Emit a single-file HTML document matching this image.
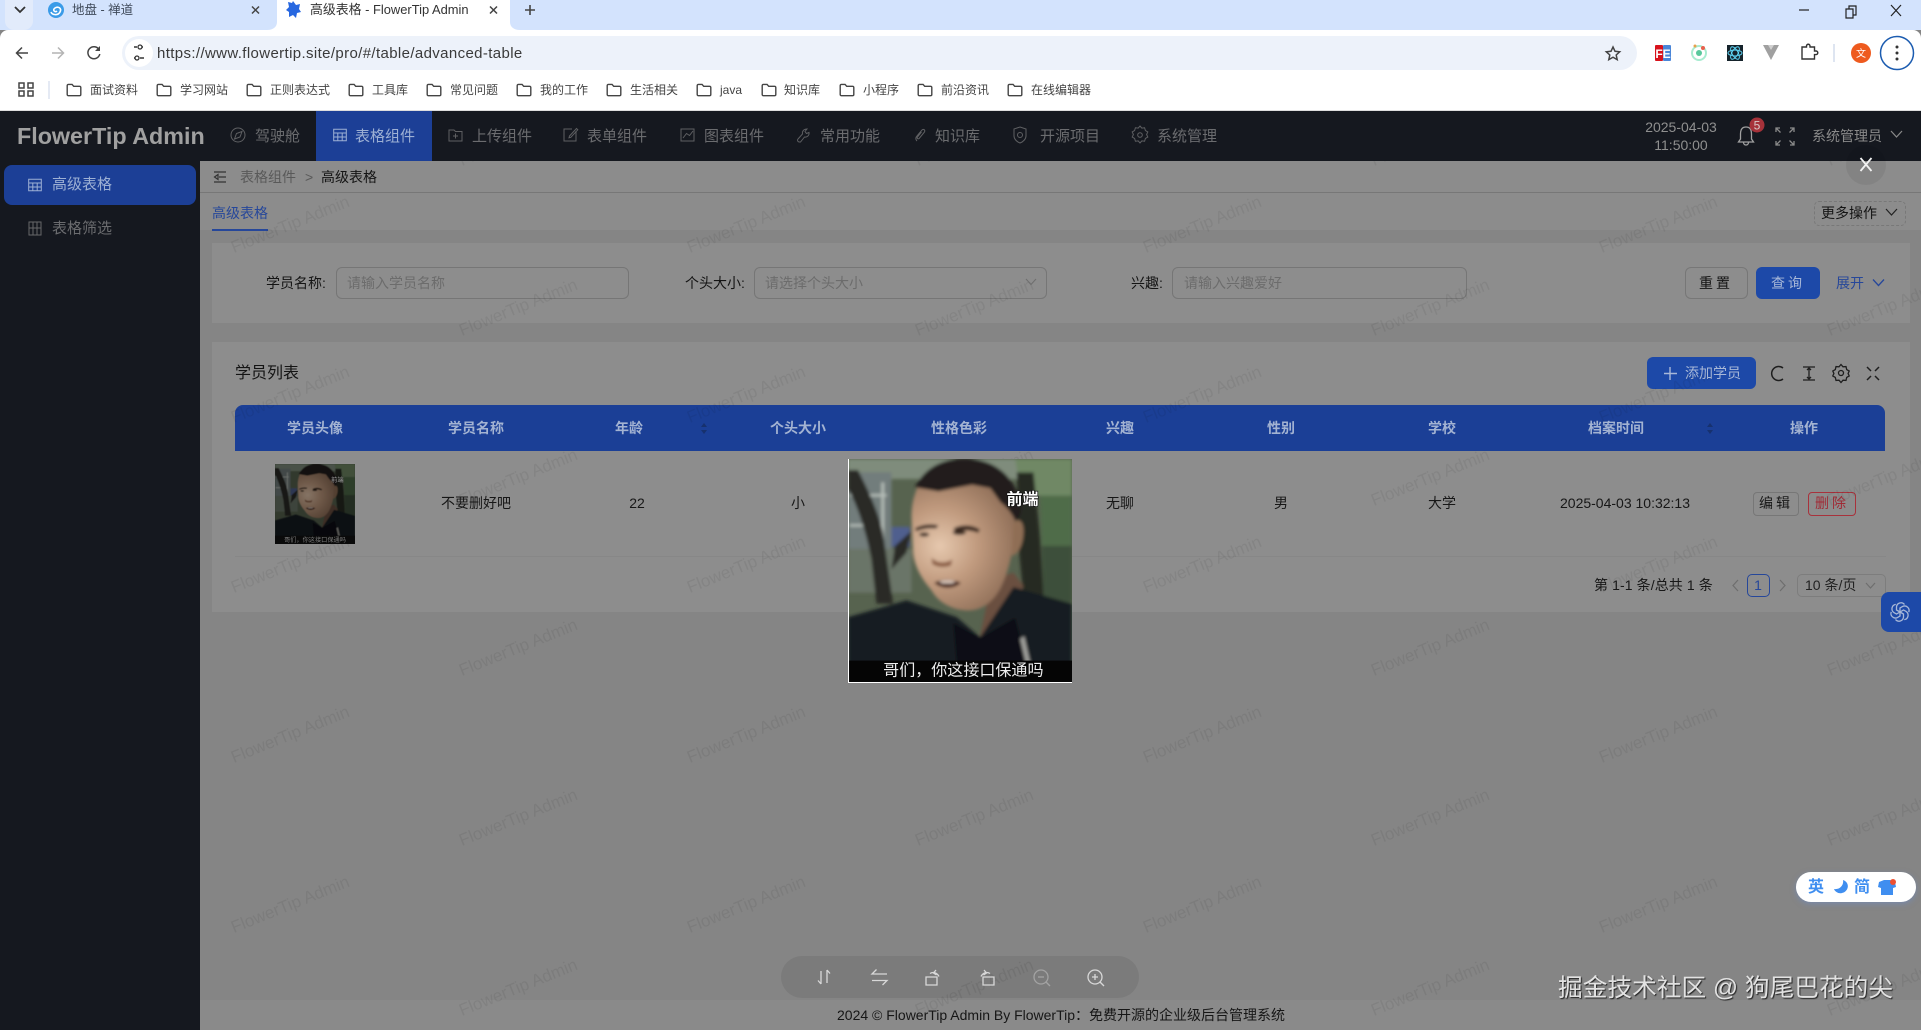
<!DOCTYPE html>
<html lang="zh-CN">
<head>
<meta charset="utf-8">
<title>高级表格 - FlowerTip Admin</title>
<style>
html,body{margin:0;padding:0;width:1921px;height:1030px;overflow:hidden;background:#858585;font-family:"Liberation Sans","Noto Sans CJK SC",sans-serif;}
.b{position:absolute;box-sizing:border-box}
.t{position:absolute;white-space:nowrap;line-height:20px;font-size:14px}
.c{transform:translateX(-50%)}
.bm{color:#444;font-size:12px}
.mn{color:#6b6c6f;font-size:15px}
.th{color:#a3b3d2;font-weight:700;font-size:14px;top:418px}
.td{color:#171717;font-size:14px;top:493px}
.lb{color:#141414;top:273px}
.ph{color:#6c6c6c;top:273px}
.inp{border:1px solid #767676;border-radius:6px;top:267px;height:32px}
svg.o{position:absolute;left:0;top:0;pointer-events:none}
</style>
</head>
<body>
<!-- browser chrome -->
<div class="b" style="left:0;top:0;width:1921px;height:30px;background:#d3e3fd"></div>
<div class="b" style="left:5px;top:0;width:28px;height:30px;background:#e2ebfb;border-radius:0 0 9px 9px"></div>
<div class="b" style="left:0;top:30px;width:1921px;height:81px;background:#fff;border-radius:8px 8px 0 0;border-bottom:1px solid #ddd"></div>
<div class="b" style="left:277px;top:0;width:233px;height:34px;background:#fff;border-radius:0 0 0 0"></div>
<div class="b" style="left:122px;top:36px;width:1515px;height:34px;background:#edf2fa;border-radius:17px"></div>
<div class="b" style="left:125px;top:39px;width:28px;height:28px;background:#fff;border-radius:50%"></div>
<div class="t" style="left:72px;top:0;font-size:12.5px;color:#3f4a5a">地盘 - 禅道</div>
<div class="t" style="left:310px;top:0;font-size:12.9px;color:#333">高级表格 - FlowerTip Admin</div>
<div class="t" style="left:157px;top:44px;font-size:15px;letter-spacing:.37px;color:#3a3a3a">https://www.flowertip.site/pro/#/table/advanced-table</div>
<div class="t bm" style="left:90px;top:80px">面试资料</div>
<div class="t bm" style="left:180px;top:80px">学习网站</div>
<div class="t bm" style="left:270px;top:80px">正则表达式</div>
<div class="t bm" style="left:372px;top:80px">工具库</div>
<div class="t bm" style="left:450px;top:80px">常见问题</div>
<div class="t bm" style="left:540px;top:80px">我的工作</div>
<div class="t bm" style="left:630px;top:80px">生活相关</div>
<div class="t bm" style="left:720px;top:80px">java</div>
<div class="t bm" style="left:784px;top:80px">知识库</div>
<div class="t bm" style="left:863px;top:80px">小程序</div>
<div class="t bm" style="left:941px;top:80px">前沿资讯</div>
<div class="t bm" style="left:1031px;top:80px">在线编辑器</div>

<!-- header + sidebar -->
<div class="b" style="left:0;top:111px;width:1921px;height:50px;background:#15181f"></div>
<div class="b" style="left:0;top:161px;width:200px;height:869px;background:#15181f"></div>
<div class="t" style="left:17px;top:122px;font-size:23.3px;line-height:28px;font-weight:700;color:#a0a0a0">FlowerTip Admin</div>
<div class="b" style="left:316px;top:111px;width:116px;height:50px;background:#1c3f96"></div>
<div class="t mn" style="left:255px;top:127px">驾驶舱</div>
<div class="t mn" style="left:355px;top:127px;color:#9db0d4">表格组件</div>
<div class="t mn" style="left:472px;top:127px">上传组件</div>
<div class="t mn" style="left:587px;top:127px">表单组件</div>
<div class="t mn" style="left:704px;top:127px">图表组件</div>
<div class="t mn" style="left:820px;top:127px">常用功能</div>
<div class="t mn" style="left:935px;top:127px">知识库</div>
<div class="t mn" style="left:1040px;top:127px">开源项目</div>
<div class="t mn" style="left:1157px;top:127px">系统管理</div>
<div class="t c" style="left:1681px;top:117px;color:#8f8f8f">2025-04-03</div>
<div class="t c" style="left:1681px;top:135px;color:#8f8f8f">11:50:00</div>
<div class="t" style="left:1812px;top:126px;color:#8a8a8a">系统管理员</div>
<div class="b" style="left:4px;top:165px;width:192px;height:40px;background:#1c3f96;border-radius:8px"></div>
<div class="t mn" style="left:52px;top:175px;color:#9db0d4">高级表格</div>
<div class="t mn" style="left:52px;top:219px">表格筛选</div>

<!-- main -->
<div class="b" style="left:200px;top:161px;width:1721px;height:32px;background:#8c8c8c;border-bottom:1px solid #777"></div>
<div class="b" style="left:200px;top:193px;width:1721px;height:37px;background:#8c8c8c"></div>
<div class="b" style="left:200px;top:1000px;width:1721px;height:30px;background:#8a8a8a"></div>
<div class="t" style="left:240px;top:167px;color:#595959">表格组件</div>
<div class="t" style="left:305px;top:167px;color:#595959">&gt;</div>
<div class="t" style="left:321px;top:167px;color:#141414">高级表格</div>
<div class="t" style="left:212px;top:203px;color:#26479a">高级表格</div>
<div class="b" style="left:212px;top:229px;width:56px;height:2px;background:#26479a"></div>
<div class="b" style="left:1814px;top:201px;width:92px;height:25px;border:1px dashed #787878;border-radius:5px"></div>
<div class="t" style="left:1821px;top:203px;color:#141414">更多操作</div>

<div class="b" style="left:212px;top:243px;width:1698px;height:80px;background:#8d8d8d"></div>
<div class="t lb" style="left:266px">学员名称:</div>
<div class="b inp" style="left:336px;width:293px"></div>
<div class="t ph" style="left:347px">请输入学员名称</div>
<div class="t lb" style="left:685px">个头大小:</div>
<div class="b inp" style="left:754px;width:293px"></div>
<div class="t ph" style="left:765px">请选择个头大小</div>
<div class="t lb" style="left:1131px">兴趣:</div>
<div class="b inp" style="left:1172px;width:295px"></div>
<div class="t ph" style="left:1184px">请输入兴趣爱好</div>
<div class="b" style="left:1685px;top:267px;width:63px;height:32px;border:1px solid #777;border-radius:6px"></div>
<div class="t c" style="left:1716px;top:273px;color:#141414;letter-spacing:3px">重置</div>
<div class="b" style="left:1756px;top:267px;width:64px;height:32px;background:#1d49a8;border-radius:6px"></div>
<div class="t c" style="left:1788px;top:273px;color:#a8b8d8;letter-spacing:3px">查询</div>
<div class="t" style="left:1836px;top:273px;color:#26479a">展开</div>

<div class="b" style="left:212px;top:342px;width:1698px;height:270px;background:#8d8d8d"></div>
<div class="t" style="left:235px;top:364px;font-size:16px;color:#141414">学员列表</div>
<div class="b" style="left:1647px;top:357px;width:109px;height:32px;background:#1d49a8;border-radius:6px"></div>
<div class="t" style="left:1685px;top:363px;color:#a8b8d8">添加学员</div>
<div class="b" style="left:235px;top:405px;width:1650px;height:46px;background:#1b3f96;border-radius:8px 8px 0 0"></div>
<div class="t th c" style="left:315px">学员头像</div>
<div class="t th c" style="left:476px">学员名称</div>
<div class="t th c" style="left:629px">年龄</div>
<div class="t th c" style="left:798px">个头大小</div>
<div class="t th c" style="left:959px">性格色彩</div>
<div class="t th c" style="left:1120px">兴趣</div>
<div class="t th c" style="left:1281px">性别</div>
<div class="t th c" style="left:1442px">学校</div>
<div class="t th c" style="left:1616px">档案时间</div>
<div class="t th c" style="left:1804px">操作</div>
<div class="b" style="left:235px;top:556px;width:1651px;height:1px;background:#878787"></div>
<svg class="b" style="left:275px;top:464px" width="80" height="80" viewBox="0 0 670 670">
  <use href="#face" width="670" height="670"/>
  <rect width="670" height="670" fill="#000" opacity=".42"/>
  <rect x="0" y="600" width="670" height="70" fill="#0a0a0a"/>
  <text x="335" y="652" fill="#7c7c7c" font-size="52" text-anchor="middle" font-family="Noto Sans CJK SC,sans-serif">哥们，你这接口保通吗</text>
  <text x="522" y="150" fill="#a0a0a0" font-size="52" text-anchor="middle" font-family="Noto Sans CJK SC,sans-serif">前端</text>
</svg>
<div class="t td c" style="left:476px">不要删好吧</div>
<div class="t td c" style="left:637px">22</div>
<div class="t td c" style="left:798px">小</div>
<div class="t td c" style="left:1120px">无聊</div>
<div class="t td c" style="left:1281px">男</div>
<div class="t td c" style="left:1442px">大学</div>
<div class="t td c" style="left:1625px">2025-04-03 10:32:13</div>
<div class="b" style="left:1753px;top:492px;width:46px;height:24px;border:1px solid #777;border-radius:4px"></div>
<div class="t c" style="left:1776px;top:493px;color:#171717;letter-spacing:3px">编辑</div>
<div class="b" style="left:1808px;top:492px;width:48px;height:24px;border:1px solid #a8323c;border-radius:4px"></div>
<div class="t c" style="left:1832px;top:493px;color:#a02a35;letter-spacing:3px">删除</div>
<div class="t" style="left:1594px;top:575px;color:#171717;letter-spacing:.1px">第 1-1 条/总共 1 条</div>
<div class="b" style="left:1747px;top:574px;width:23px;height:23px;border:1px solid #26479a;border-radius:5px"></div>
<div class="t c" style="left:1758px;top:575px;color:#26479a">1</div>
<div class="b" style="left:1797px;top:574px;width:89px;height:23px;border:1px solid #7d7d7d;border-radius:5px"></div>
<div class="t" style="left:1805px;top:575px;color:#222">10 条/页</div>

<!-- watermark -->
<svg class="o" width="1921" height="1030">
  <defs>
    <pattern id="wm" patternUnits="userSpaceOnUse" x="62" y="181" width="456" height="170">
      <g font-family="Liberation Sans,sans-serif" font-size="17" fill="#000" fill-opacity=".065" text-anchor="middle">
        <text x="228" y="49" transform="rotate(-22 228 43)">FlowerTip Admin</text>
        <text x="0" y="132" transform="rotate(-22 0 126)">FlowerTip Admin</text>
        <text x="456" y="132" transform="rotate(-22 456 126)">FlowerTip Admin</text>
      </g>
    </pattern>
  </defs>
  <rect x="200" y="161" width="1721" height="869" fill="url(#wm)"/>
</svg>

<!-- icons -->
<svg class="o" width="1921" height="1030" fill="none">
  <defs>
    <symbol id="fd" viewBox="0 0 16 16" overflow="visible"><path d="M1.2 3.6a1.2 1.2 0 0 1 1.2-1.2h3.7l1.6 1.9h5.9a1.2 1.2 0 0 1 1.2 1.2v7a1.2 1.2 0 0 1-1.2 1.2H2.4a1.2 1.2 0 0 1-1.2-1.2z" stroke="#444" stroke-width="1.4" fill="none"/></symbol>
    <symbol id="gr" viewBox="0 0 14 14" overflow="visible"><path d="M.7 1.2h12.6v11.6H.7zM.7 5h12.6M.7 9h12.6M4.8 5v7.8M9.2 5v7.8" stroke="currentColor" stroke-width="1" fill="none"/></symbol>
  </defs>

  <!-- tabs -->
  <path d="M15 7l5 5 5-5" stroke="#333" stroke-width="1.8"/>
  <path d="M267 30h10v-8c0 5-4 8-10 8zM520 30h-10v-8c0 5 4 8 10 8z" fill="#fff"/>
  <circle cx="56" cy="10" r="8" fill="#3a9be8"/><path d="M51 12c1 3 7 4 9 0s-2-6-5-4 0 5 2 3" stroke="#fff" stroke-width="1.6"/>
  <path d="M293 1l3 4 4-1-1 5 2 3-4 1-1 5-3-3-4 2 0-5-3-2 3-3-1-5 4 1z" fill="#2767e0"/>
  <path d="M252 6.500l7 7M259 6.500l-7 7M490 6.500l7 7M497 6.500l-7 7" stroke="#444" stroke-width="1.500"/>
  <path d="M530 7v10M525 12h10" stroke="#444" stroke-width="1.600" transform="translate(0 -2)"/>
  <path d="M1799 10h10" stroke="#222" stroke-width="1.200"/>
  <path d="M1846 9h7v9h-7zM1849 9V6h7v9h-3" stroke="#222" stroke-width="1.200"/>
  <path d="M1891 5l10 11M1901 5l-10 11" stroke="#222" stroke-width="1.200"/>

  <!-- toolbar -->
  <path d="M28 53H16.500M22 47.500l-5.500 5.500 5.500 5.500" stroke="#444" stroke-width="1.500"/>
  <path d="M52 53h11.500M58 47.500l5.500 5.500-5.500 5.500" stroke="#b4b4b4" stroke-width="1.500"/>
  <path d="M99 49.500a6 6 0 1 0 .8 4.500" stroke="#444" stroke-width="1.500"/><path d="M100 46v5h-5" fill="#444"/>
  <path d="M134 47h3M142 47h1M134 58h1M140 58h4" stroke="#333" stroke-width="1.500"/><circle cx="140" cy="47" r="2" stroke="#333" stroke-width="1.300"/><circle cx="137" cy="58" r="2" stroke="#333" stroke-width="1.300"/>
  <path d="M1613 47l2 4.300 4.700.5-3.500 3.200 1 4.600-4.200-2.400-4.200 2.400 1-4.600-3.500-3.200 4.700-.5z" stroke="#444" stroke-width="1.500"/>
  <rect x="1655" y="45" width="8" height="16" rx="1" fill="#d8121c"/><rect x="1663" y="45" width="8" height="16" rx="1" fill="#4a86d8"/>
  <text x="1663" y="58" fill="#fff" font-size="12" font-weight="700" text-anchor="middle" font-family="Liberation Sans,sans-serif">FE</text>
  <circle cx="1699" cy="53" r="7" stroke="#a8ecd0" stroke-width="2"/><circle cx="1699" cy="53" r="3" fill="#59c89c"/><circle cx="1703" cy="48" r="2" fill="#e8604c"/><circle cx="1695" cy="46" r="1.500" fill="#e8a04c"/>
  <rect x="1727" y="45" width="16" height="16" fill="#15232b"/><g stroke="#61dafb" stroke-width=".9"><ellipse cx="1735" cy="53" rx="7" ry="3"/><ellipse cx="1735" cy="53" rx="7" ry="3" transform="rotate(60 1735 53)"/><ellipse cx="1735" cy="53" rx="7" ry="3" transform="rotate(120 1735 53)"/></g>
  <path d="M1763 45h16l-8 15z" fill="#a0a0a0"/><path d="M1768 45h6l-3 5z" fill="#d0d0d0"/>
  <path d="M1802 47h4.500v-1a1.700 1.700 0 0 1 3.500 0v1h4.500v4h1.500a1.800 1.800 0 0 1 0 3.600h-1.500v4.400h-12.500z" stroke="#333" stroke-width="1.400"/>
  <path d="M1834 44v18" stroke="#d3dcec" stroke-width="1.500"/>
  <circle cx="1861" cy="53" r="10" fill="#ee5a1e"/><text x="1861" y="57" fill="#fff" font-size="10" text-anchor="middle" font-family="Noto Sans CJK SC,sans-serif">文</text>
  <circle cx="1897" cy="53" r="16.500" stroke="#1c5cb0" stroke-width="1.500"/>
  <circle cx="1897" cy="47" r="1.500" fill="#333"/><circle cx="1897" cy="53" r="1.500" fill="#333"/><circle cx="1897" cy="59" r="1.500" fill="#333"/>

  <!-- bookmarks -->
  <path d="M20 84h5v5h-5zM29 84h5v5h-5zM20 92h5v5h-5zM29 92h5v5h-5z" stroke="#444" stroke-width="1.500" transform="translate(-1 -1)"/>
  <path d="M49 81v18" stroke="#d3dcec" stroke-width="1.200"/>
  <use href="#fd" x="66" y="82" width="16" height="16"/><use href="#fd" x="156" y="82" width="16" height="16"/><use href="#fd" x="246" y="82" width="16" height="16"/><use href="#fd" x="348" y="82" width="16" height="16"/><use href="#fd" x="426" y="82" width="16" height="16"/><use href="#fd" x="516" y="82" width="16" height="16"/><use href="#fd" x="606" y="82" width="16" height="16"/><use href="#fd" x="696" y="82" width="16" height="16"/><use href="#fd" x="761" y="82" width="16" height="16"/><use href="#fd" x="839" y="82" width="16" height="16"/><use href="#fd" x="917" y="82" width="16" height="16"/><use href="#fd" x="1007" y="82" width="16" height="16"/>

  <!-- header menu -->
  <g stroke="#5f6063" stroke-width="1">
    <circle cx="238" cy="135" r="7"/><path d="M234.500 139l2-5.500 5.500-2-2 5.500z"/>
    <path d="M449 130h5l1.500 1.500h6.500V141h-13zM455.500 133.500v5M453 136h5"/>
    <path d="M576 131v10h-12v-12h8M569.500 136l7-7.500 1.300 1.300-7 7.500-1.800.5z"/>
    <path d="M681 129h13v12h-13zM683 138l3.500-4.500 3 2 3.500-4.500"/>
    <path d="M799 142c-1.500-.5-2-2-1-3l4.500-5c-.5-2.500 1-5 4.500-5l-2 2.500 1.500 2 2.500-1c.5 3-2 5-4.500 4.500l-4 5z"/>
    <path d="M917 141c-2-2-1-4 0-5l5-6c1.500-1.500 3.500 0 2.500 2l-5 6c-.5 1-1.500 1-2 .5s-.5-1 0-1.500l4-5"/>
    <path d="M1020 127l6 2v7c0 3-3 6-6 7-3-1-6-4-6-7v-7z"/><circle cx="1020" cy="135" r="2.500"/>
    <path d="M1140 127.500l1.800 2.100 2.800-.3.800 2.800 2.400 1.400-1.200 2.500 1.200 2.500-2.400 1.400-.8 2.800-2.800-.3-1.800 2.100-1.800-2.100-2.800.3-.8-2.800-2.400-1.400 1.200-2.500-1.200-2.500 2.400-1.400.8-2.800 2.800.3z" transform="translate(0 -1.500)"/><circle cx="1140" cy="135" r="2.300"/>
  </g>
  <use href="#gr" x="333" y="128" width="14" height="14" style="color:#9db0d4"/>
  <use href="#gr" x="28" y="178" width="14" height="14" style="color:#9db0d4"/>
  <path d="M29 222h12v13H29zM33 222v13M37 222v13M29 228h12" stroke="#66676a" stroke-width="1"/>

  <!-- header right -->
  <path d="M1746 127c-4 0-5.500 3-5.500 7v5l-2 3h15l-2-3v-5c0-4-1.500-7-5.500-7zM1743.500 142.500a2.500 2.500 0 0 0 5 0" stroke="#a0a0a0" stroke-width="1.300"/>
  <circle cx="1757" cy="125" r="7.500" fill="#a6323a"/><text x="1757" y="129.500" fill="#d8c8c8" font-size="12" text-anchor="middle" font-family="Liberation Sans,sans-serif">5</text>
  <path d="M1776 128l4.500 4.500M1776 132v-4h4M1794 128l-4.500 4.500M1794 132v-4h-4M1776 145l4.500-4.500M1776 141v4h4M1794 145l-4.500-4.500M1794 141v4h-4" stroke="#8a8a8a" stroke-width="1.300"/>
  <path d="M1891 131l5.500 6 5.500-6" stroke="#8a8a8a" stroke-width="1.200"/>

  <!-- close -->
  <circle cx="1866" cy="165" r="20" fill="#000" fill-opacity=".06"/>
  <path d="M1860.500 158l11 13M1871.500 158l-11 13" stroke="#f2f2f2" stroke-width="1.800"/>

  <!-- main icons -->
  <path d="M214 172h12M219 177h7M214 182h12M218 174.500l-3.500 2.500 3.500 2.500z" stroke="#333" stroke-width="1.200"/>
  <path d="M1886 209l5.500 6 5.500-6" stroke="#222" stroke-width="1.200"/>
  <path d="M1026 279l5 5.500 5-5.500" stroke="#6e6e6e" stroke-width="1"/>
  <path d="M1873 279.500l5.500 6 5.500-6" stroke="#26479a" stroke-width="1.300"/>
  <path d="M1670 367v13M1664 373.500h13" stroke="#a8b8d8" stroke-width="1.400"/>
  <path d="M1783 368a7 7 0 1 0 0 11" stroke="#1e1e1e" stroke-width="1.500"/>
  <path d="M1803 367h12M1803 380h12M1809 368v11M1807 370l2-2 2 2M1807 377l2 2 2-2" stroke="#1e1e1e" stroke-width="1.300"/>
  <path d="M1841 366l2 2.300 3-.2.700 3 2.500 1.400-1.100 2.500 1.100 2.500-2.500 1.400-.7 3-3-.2-2 2.300-2-2.300-3 .2-.7-3-2.500-1.400 1.100-2.500-1.100-2.500 2.500-1.400.7-3 3 .2z" stroke="#1e1e1e" stroke-width="1.300" transform="translate(0 -1.500)"/><circle cx="1841" cy="373" r="2.500" stroke="#1e1e1e" stroke-width="1.300"/>
  <path d="M1867 367l4 4M1879 367l-4 4M1867 380l4-4M1879 380l-4-4" stroke="#1e1e1e" stroke-width="1.500"/>
  <path d="M704 423l-3 4h6zM704 434l-3-4h6zM1710 423l-3 4h6zM1710 434l-3-4h6z" fill="#17316e"/>
  <path d="M1738 580l-5 5.500 5 5.500" stroke="#6e6e6e" stroke-width="1.200"/>
  <path d="M1780 580l5 5.500-5 5.500" stroke="#6e6e6e" stroke-width="1.200"/>
  <path d="M1866 583l4.500 5 4.500-5" stroke="#6e6e6e" stroke-width="1.200"/>
</svg>

<!-- floating bits -->
<div class="b" style="left:1881px;top:592px;width:40px;height:40px;background:#1d49a8;border-radius:8px 0 0 8px"></div>
<svg class="o" width="1921" height="1030" fill="none">
  <g stroke="#a8b8d8" stroke-width="1.300" transform="translate(1900 612)">
    <path d="M0 0L-3.500-2V-5a4.500 4.500 0 0 1 8-2.500"/>
    <path d="M0 0L-3.500-2V-5a4.500 4.500 0 0 1 8-2.500" transform="rotate(60)"/>
    <path d="M0 0L-3.500-2V-5a4.500 4.500 0 0 1 8-2.500" transform="rotate(120)"/>
    <path d="M0 0L-3.500-2V-5a4.500 4.500 0 0 1 8-2.500" transform="rotate(180)"/>
    <path d="M0 0L-3.500-2V-5a4.500 4.500 0 0 1 8-2.500" transform="rotate(240)"/>
    <path d="M0 0L-3.500-2V-5a4.500 4.500 0 0 1 8-2.500" transform="rotate(300)"/>
  </g>
</svg>
<div class="b" style="left:781px;top:956px;width:358px;height:42px;background:rgba(0,0,0,.075);border-radius:21px"></div>
<svg class="o" width="1921" height="1030" fill="none">
  <g stroke="#d8d8d8" stroke-width="1.300">
    <path d="M821 971v13M821 984l-3-3.500M827 983v-13M827 970l3 3.500"/>
    <path d="M887 974h-15l4.500-4.500M872 980.500h15l-4.500 4.500"/>
    <path d="M926 977h11v8h-11zM930 973.500c3-2 7-1 9 3M936 970l-2.500 3 3 2"/>
    <path d="M983 977h11v8h-11zM990 973.500c-3-2-7-1-9 3M984 970l2.500 3-3 2"/>
    <path d="M1046 982l4 4" stroke="#a3a3a3"/><circle cx="1041" cy="977" r="7" stroke="#a3a3a3"/><path d="M1038 977h6" stroke="#a3a3a3"/>
    <path d="M1100 982l4 4"/><circle cx="1095" cy="977" r="7"/><path d="M1092 977h6M1095 974v6"/>
  </g>
</svg>
<div class="t" style="left:837px;top:1005px;color:#161616">2024 © FlowerTip Admin By FlowerTip：免费开源的企业级后台管理系统</div>

<div class="b" style="left:1796px;top:872px;width:120px;height:30px;background:#fff;border-radius:15px;box-shadow:0 2px 6px rgba(110,140,200,.55)"></div>
<div class="t c" style="left:1816px;top:878px;color:#3f8ef0;font-size:16px;font-weight:700">英</div>
<div class="t c" style="left:1862px;top:878px;color:#3f8ef0;font-size:16px;font-weight:700">简</div>
<svg class="o" width="1921" height="1030">
  <path d="M1843 880c1 5-3 10-9 9 1 3 5 5 8 4 6-1 9-10 1-13z" fill="#3f8ef0"/>
  <path d="M1879 881l5-2h6l5 2 1 5-3 1v7h-12v-7l-3-1z" fill="#3f8ef0" transform="translate(0 1)"/>
  <circle cx="1893" cy="882" r="3" fill="#ee5030"/>
</svg>

<div class="t" style="left:1558px;top:973px;line-height:32px;font-size:24.700px;color:#e2e2e2;text-shadow:1px 1px 1px #222">掘金技术社区 @ 狗尾巴花的尖</div>

<!-- preview image -->
<svg class="b" style="left:848px;top:459px;width:224px;height:224px" viewBox="0 0 670 670">
  <defs>
    <radialGradient id="sk" gradientUnits="userSpaceOnUse" cx="275" cy="260" r="250">
      <stop offset="0" stop-color="#e6c8ae"/><stop offset=".45" stop-color="#c09a7e"/><stop offset="1" stop-color="#8a6a54"/>
    </radialGradient>
    <filter id="bl" x="-5%" y="-5%" width="110%" height="110%"><feGaussianBlur stdDeviation="5"/></filter>
    <symbol id="face" viewBox="0 0 670 670">
      <rect width="670" height="670" fill="#57634f"/>
      <g filter="url(#bl)">
        <path d="M0 0h670v60H0z" fill="#7f8c7c"/>
        <path d="M500 0h170v110H520z" fill="#6f8865"/>
        <path d="M0 40h130v230H0z" fill="#727d7c"/>
        <path d="M5 105h110v7H5zM5 195h100v7H5zM100 70h8v170h-8z" fill="#b8c0ba"/>
        <path d="M0 270h190v130H0z" fill="#6b7467"/>
        <path d="M130 203h55v60h-55z" fill="#4f5f8e"/>
        <path d="M0 33l30 0c25 50 60 120 75 190l30 210H85L70 300C55 220 25 130 0 90z" fill="#2a2b26"/>
        <path d="M190 215l-50 45-10 70 45-50z" fill="#2a2b26"/>
        <path d="M505 40h50l20 200 10 170h-60l-15-150z" fill="#262b24"/>
        <path d="M575 110h95v150h-90z" fill="#506c4a"/>
        <path d="M580 260h90v170h-85z" fill="#3c4f3b"/>
        <path d="M430 360l65-20 30 40-60 130-70 20z" fill="#6a5040"/>
        <path d="M0 473l175-50 150 50 70 60 100-150 175 50v237H0z" fill="#191d20"/>
        <path d="M315 490l80 45 105-60 35 135H325z" fill="#0e1012"/>
        <path d="M190 173c0-50 15-100 50-135 60-40 170-40 215 10 35 40 50 90 45 150-5 70-15 130-45 190-20 35-50 65-95 65-50 0-90-25-110-60-30-35-50-70-55-110z" fill="url(#sk)"/>
        <path d="M495 190c15-15 30-5 30 25 0 40-15 70-35 75z" fill="#8f6e55"/>
        <path d="M200 85C235 15 300-5 365 0c75 5 130 50 150 125 8 30 0 50-14 62-8-22-25-42-45-58l-30-42-55-10-100 20z" fill="#221f1b"/>
        <path d="M200 208c20-12 45-15 70-10l-6 10c-20-2-40 0-60 8zM315 208c25-14 55-12 80 3l-6 10c-20-8-45-10-68-4z" fill="#3c2c20"/>
        <ellipse cx="228" cy="226" rx="15" ry="6" fill="#3a2a20"/><ellipse cx="333" cy="220" rx="20" ry="7" fill="#3a2a20"/>
        <path d="M250 295c15 18 45 18 62 5l-4 18c-18 8-42 6-56-4z" fill="#8f6249"/>
        <path d="M258 370c20-12 55-12 80 0-20 20-60 20-80 0z" fill="#4c2a24"/><path d="M272 366c15-5 35-5 50 0l-10 6h-30z" fill="#dccabd"/>
        <path d="M527 530l18 80h-13l-17-72z" fill="#a0a09c"/>
      </g>
      <rect y="603" width="670" height="67" fill="#050505"/>
    </symbol>
  </defs>
  <use href="#face" width="670" height="670"/>
  <rect x="0" y="0" width="3" height="670" fill="#fff"/><rect y="667" width="670" height="3" fill="#fff"/>
  <text x="345" y="647" fill="#ededed" font-size="48" text-anchor="middle" font-family="Noto Sans CJK SC,sans-serif">哥们，你这接口保通吗</text>
  <text x="522" y="136" fill="#fff" stroke="#111" stroke-width="4" paint-order="stroke" font-size="48" font-weight="700" text-anchor="middle" font-family="Noto Sans CJK SC,sans-serif">前端</text>
</svg>
</body>
</html>
